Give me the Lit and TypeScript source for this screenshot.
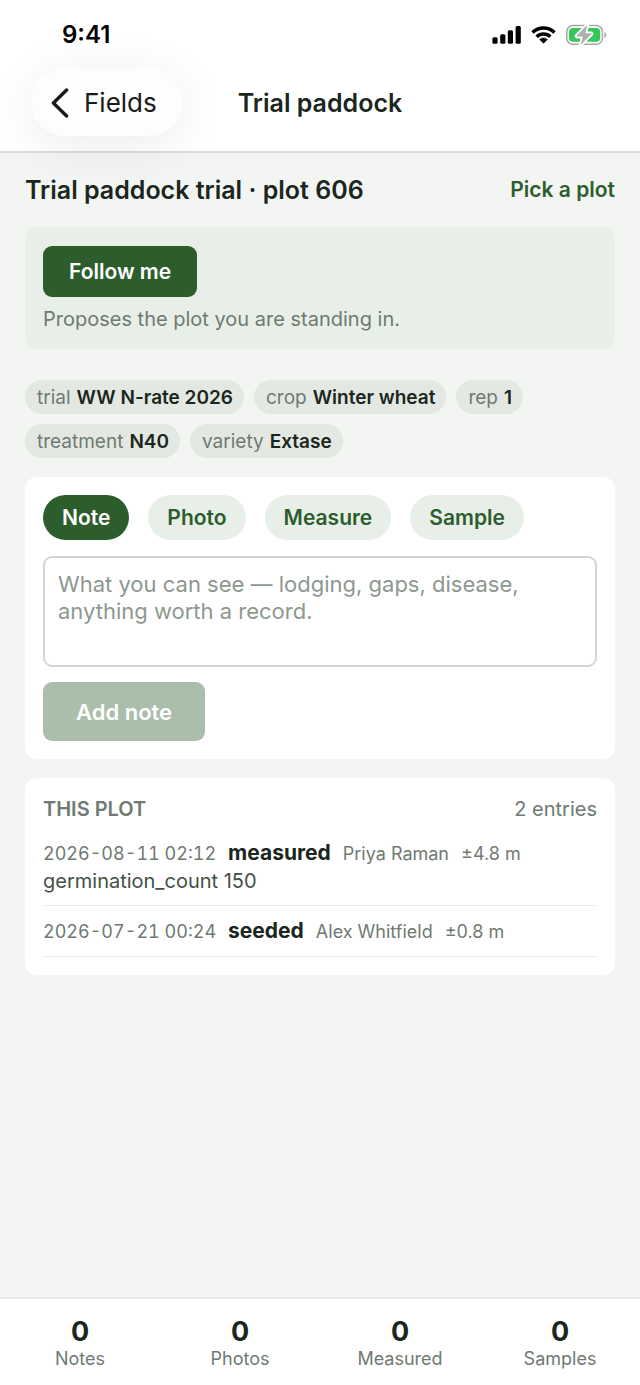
import { LitElement, html, css, svg } from "lit";
import { customElement, state } from "lit/decorators.js";
import { classMap } from "lit/directives/class-map.js";

interface Entry {
  at: string;
  kind: string;
  who: string;
  accuracy: string;
  detail?: string;
}

const FACTS: [string, string][] = [
  ["trial", "WW N-rate 2026"],
  ["crop", "Winter wheat"],
  ["rep", "1"],
  ["treatment", "N40"],
  ["variety", "Extase"],
];

const MODES = ["Note", "Photo", "Measure", "Sample"];

const ENTRIES: Entry[] = [
  {
    at: "2026-08-11 02:12",
    kind: "measured",
    who: "Priya Raman",
    accuracy: "±4.8 m",
    detail: "germination_count 150",
  },
  { at: "2026-07-21 00:24", kind: "seeded", who: "Alex Whitfield", accuracy: "±0.8 m" },
];

const TOTALS: [string, number][] = [
  ["Notes", 0],
  ["Photos", 0],
  ["Measured", 0],
  ["Samples", 0],
];

const signalIcon = svg`
  <svg width="29" height="20" viewBox="0 0 29 20" aria-hidden="true">
    <rect x="0.4" y="12.2" width="5.2" height="6.6" rx="1.5" />
    <rect x="8.2" y="9.2" width="5.2" height="9.6" rx="1.5" />
    <rect x="15.8" y="5.2" width="5.2" height="13.6" rx="1.5" />
    <rect x="23.6" y="1" width="5.2" height="17.8" rx="1.5" />
  </svg>`;

const wifiIcon = svg`
  <svg width="25" height="20" viewBox="0 0 26 20" aria-hidden="true">
    <g fill="none" stroke="#000" stroke-width="3.6">
      <path d="M1.6 7.4 A16.4 16.4 0 0 1 24.4 7.4" />
      <path d="M5.9 11.8 A10.2 10.2 0 0 1 20.1 11.8" />
    </g>
    <path d="M13 18.6 L9 14.6 A5.8 5.8 0 0 1 17 14.6 Z" stroke="#000" stroke-width="0.6" stroke-linejoin="round" />
  </svg>`;

const batteryIcon = svg`
  <svg width="42" height="22" viewBox="0 0 42 22" aria-hidden="true">
    <rect x="0.8" y="1.6" width="35.6" height="18.6" rx="6" fill="none" stroke="#a9a9a9" stroke-width="1.5" />
    <path d="M38.4 8 C41 8.8 41 13.2 38.4 14 Z" fill="#a9a9a9" />
    <rect x="3" y="4" width="31.2" height="13.8" rx="4" fill="#34c759" />
    <path
      d="M21.4 0.8 L10.8 11.6 C10.4 12 10.6 12.6 11.2 12.6 L16.8 12.6 L14.6 21 L25.4 10.2 C25.8 9.7 25.5 9.2 25 9.2 L19.4 9.2 Z"
      fill="#b0b0b0"
      stroke="#fff"
      stroke-width="3.6"
      stroke-linejoin="round"
      paint-order="stroke"
    />
  </svg>`;

@customElement("app-root")
export class AppRoot extends LitElement {
  @state() private mode = "Note";
  @state() private draft = "";

  static styles = css`
    :host {
      --ink: #1b261d;
      --muted: #6f7a71;
      --green: #2d5d2d;
      --tint: #e8efe8;
      display: flex;
      flex-direction: column;
      min-height: 100vh;
      background: #f3f5f3;
      color: var(--ink);
      font-family: Inter, "Liberation Sans", sans-serif;
      font-size: 20px;
      line-height: 24px;
    }
    * {
      box-sizing: border-box;
    }
    h1,
    h2,
    h3,
    p,
    ul,
    dl,
    dd {
      margin: 0;
      padding: 0;
    }
    ul {
      list-style: none;
    }
    button,
    textarea {
      font: inherit;
      border: 0;
      margin: 0;
    }
    button {
      cursor: pointer;
    }

    .top {
      background: #fff;
      border-bottom: 2px solid #dadbda;
    }
    .status {
      display: flex;
      justify-content: space-between;
      align-items: center;
      height: 68px;
      padding: 2px 32px 0 62px;
      color: #000;
    }
    .clock {
      font-size: 24px;
      font-weight: 600;
    }
    .indicators {
      display: flex;
      align-items: center;
      gap: 10px;
    }
    .indicators svg {
      display: block;
    }
    .nav {
      display: grid;
      grid-template-columns: 1fr auto 1fr;
      align-items: center;
      padding: 0 31px 15px;
    }
    .back {
      justify-self: start;
      display: flex;
      align-items: center;
      gap: 15px;
      height: 68px;
      padding: 2px 26px 0 20px;
      border-radius: 34px;
      background: #fdfdfd;
      color: #1a1a1a;
      font-size: 26px;
      box-shadow: 0 8px 48px rgba(0, 0, 0, 0.08);
    }
    .title {
      padding-top: 2px;
      font-size: 25px;
      font-weight: 600;
      line-height: 32px;
    }

    .page {
      flex: 1;
      display: flex;
      flex-direction: column;
      padding: 20px 25px;
    }
    .heading {
      display: flex;
      justify-content: space-between;
      align-items: center;
      min-height: 34px;
      margin-bottom: 20px;
    }
    .plot {
      font-size: 25px;
      font-weight: 600;
      line-height: 32px;
    }
    .link {
      padding: 0;
      background: none;
      color: var(--green);
      font-size: 21px;
      font-weight: 600;
    }
    .follow {
      padding: 19px 18px 18px;
      border-radius: 12px;
      background: var(--tint);
      color: var(--muted);
      margin-bottom: 31px;
    }
    .primary {
      display: block;
      padding: 0 26px;
      height: 51px;
      border-radius: 9px;
      background: var(--green);
      color: #fff;
      font-size: 21px;
      font-weight: 600;
    }
    .hint {
      padding-top: 10px;
    }
    .facts {
      display: flex;
      flex-wrap: wrap;
      gap: 10px;
      margin-bottom: 19px;
    }
    .fact {
      display: flex;
      gap: 6px;
      height: 34px;
      align-items: center;
      padding: 2px 11px 0 12px;
      border-radius: 17px;
      background: #e3e8e3;
      font-size: 19px;
    }
    .fact dt {
      color: var(--muted);
    }
    .fact dd {
      font-weight: 600;
    }
    .card {
      padding: 18px;
      border-radius: 12px;
      background: #fff;
    }
    .card + .card {
      margin-top: 19px;
    }
    .modes {
      display: flex;
      flex-wrap: wrap;
      gap: 19px;
    }
    .mode {
      height: 45px;
      padding: 0 19px;
      border-radius: 23px;
      background: var(--tint);
      color: var(--green);
      font-size: 21px;
      font-weight: 600;
    }
    .mode.on {
      background: var(--green);
      color: #fff;
    }
    .text {
      display: block;
      width: 100%;
      height: 111px;
      margin: 16px 0 15px;
      padding: 13px;
      border: 2px solid #d0d8d0;
      border-radius: 9px;
      background: #fff;
      color: var(--ink);
      font-size: 22px;
      line-height: 27px;
      resize: none;
    }
    .text::placeholder {
      color: #8d988f;
      opacity: 1;
    }
    .add {
      height: 59px;
      padding: 0 33px;
      font-size: 22px;
    }
    .add:disabled {
      background: #abbeac;
      cursor: default;
    }
    .card-head {
      display: flex;
      justify-content: space-between;
      color: var(--muted);
      padding: 1px 0 7px;
    }
    .label {
      font-size: 20px;
      font-weight: 600;
    }
    .entry {
      padding: 10px 0 9px;
      border-bottom: 1px solid #e9ece9;
    }
    .line {
      display: flex;
      flex-wrap: wrap;
      align-items: baseline;
      column-gap: 12px;
      line-height: 30px;
      font-size: 18px;
      color: var(--muted);
    }
    .when {
      font-variant-numeric: tabular-nums;
    }
    .kind {
      color: var(--ink);
      font-size: 21px;
      font-weight: 700;
    }
    .detail {
      color: #445047;
      padding-bottom: 3px;
    }

    .totals {
      display: grid;
      grid-template-columns: repeat(4, 1fr);
      padding: 17px 0 14px;
      border-top: 2px solid #e6e8e6;
      background: #fff;
      text-align: center;
    }
    .total {
      display: flex;
      flex-direction: column-reverse;
    }
    .total dt {
      color: var(--muted);
      font-size: 18px;
    }
    .total dd {
      font-size: 27px;
      font-weight: 700;
      line-height: 31px;
    }
  `;

  render() {
    return html`
      <header class="top">
        <div class="status">
          <span class="clock">9:41</span>
          <span class="indicators">${signalIcon}${wifiIcon}${batteryIcon}</span>
        </div>
        <nav class="nav">
          <button class="back" type="button">
            <svg width="18" height="30" viewBox="0 0 18 30" aria-hidden="true">
              <path
                d="M15.6 2 L2.4 15 L15.6 28"
                fill="none"
                stroke="#1a1a1a"
                stroke-width="3.4"
                stroke-linecap="round"
                stroke-linejoin="round"
              />
            </svg>
            Fields
          </button>
          <h1 class="title">Trial paddock</h1>
        </nav>
      </header>

      <main class="page">
        <div class="heading">
          <h2 class="plot">Trial paddock trial · plot 606</h2>
          <button class="link" type="button">Pick a plot</button>
        </div>

        <section class="follow">
          <button class="primary" type="button">Follow me</button>
          <p class="hint">Proposes the plot you are standing in.</p>
        </section>

        <dl class="facts">
          ${FACTS.map(
            ([name, value]) => html`<div class="fact"><dt>${name}</dt><dd>${value}</dd></div>`
          )}
        </dl>

        <section class="card">
          <div class="modes">
            ${MODES.map(
              (m) => html`<button
                type="button"
                class=${classMap({ mode: true, on: m === this.mode })}
                aria-pressed=${m === this.mode ? "true" : "false"}
                @click=${() => (this.mode = m)}
              >${m}</button>`
            )}
          </div>
          <textarea
            class="text"
            aria-label="Note"
            placeholder="What you can see — lodging, gaps, disease, anything worth a record."
            .value=${this.draft}
            @input=${(e: Event) => (this.draft = (e.target as HTMLTextAreaElement).value)}
          ></textarea>
          <button class="primary add" type="button" ?disabled=${!this.draft.trim()}>Add note</button>
        </section>

        <section class="card">
          <div class="card-head">
            <h3 class="label">THIS PLOT</h3>
            <span>${ENTRIES.length} entries</span>
          </div>
          <ul>
            ${ENTRIES.map(
              (e) => html`<li class="entry">
                <div class="line">
                  <time class="when">${e.at}</time>
                  <strong class="kind">${e.kind}</strong>
                  <span>${e.who}</span>
                  <span>${e.accuracy}</span>
                </div>
                ${e.detail ? html`<p class="detail">${e.detail}</p>` : ""}
              </li>`
            )}
          </ul>
        </section>
      </main>

      <footer>
        <dl class="totals">
          ${TOTALS.map(
            ([name, count]) => html`<div class="total"><dt>${name}</dt><dd>${count}</dd></div>`
          )}
        </dl>
      </footer>
    `;
  }
}
